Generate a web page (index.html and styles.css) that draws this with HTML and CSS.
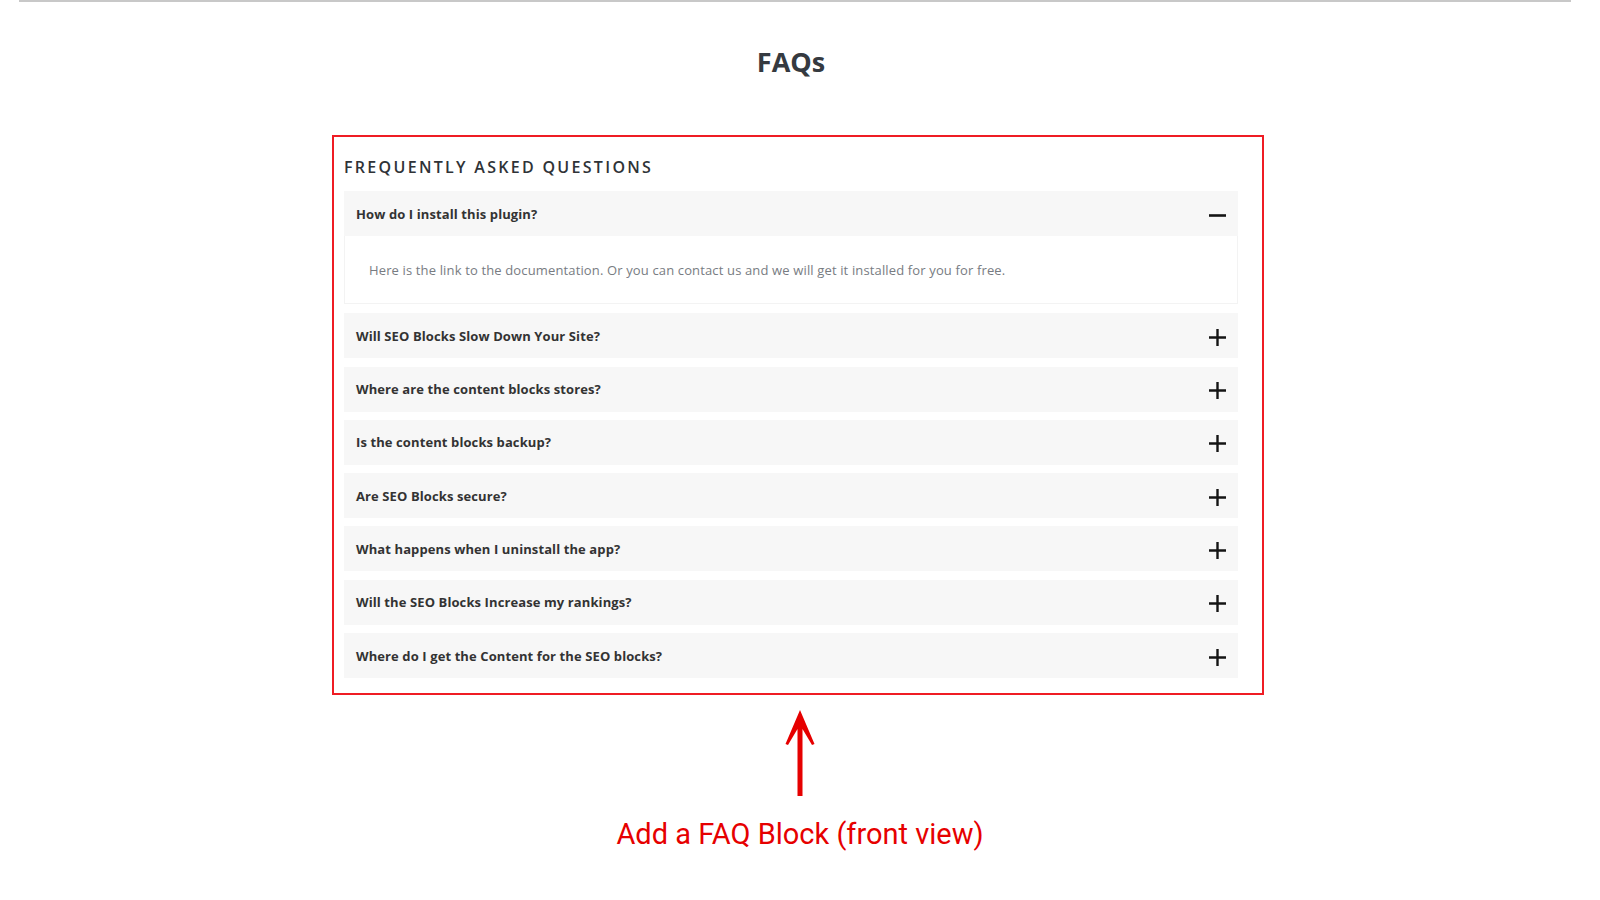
FILE: index.html
```html
<!DOCTYPE html>
<html lang="en">
<head>
<meta charset="utf-8">
<title>FAQs</title>
<link rel="stylesheet" href="styles.css">
</head>
<body>
<div class="topline"></div>
<h1 class="page-title">FAQs</h1>
<section class="faq-box">
  <h2 class="faq-heading">Frequently Asked Questions</h2>
  <div class="faq-list">
    <div class="faq-item open">
      <div class="faq-q">
        <span>How do I install this plugin?</span>
        <svg class="icon" viewBox="0 0 17 17" width="17" height="17"><line x1="0" y1="8.5" x2="17" y2="8.5" stroke="#141414" stroke-width="2.6"/></svg>
      </div>
      <div class="faq-a">Here is the link to the documentation. Or you can contact us and we will get it installed for you for free.</div>
    </div>
    <div class="faq-item">
      <div class="faq-q"><span>Will SEO Blocks Slow Down Your Site?</span>
        <svg class="icon" viewBox="0 0 17 17" width="17" height="17"><path d="M0 8.5H17M8.5 0V17" stroke="#141414" stroke-width="2.4"/></svg></div>
    </div>
    <div class="faq-item">
      <div class="faq-q"><span>Where are the content blocks stores?</span>
        <svg class="icon" viewBox="0 0 17 17" width="17" height="17"><path d="M0 8.5H17M8.5 0V17" stroke="#141414" stroke-width="2.4"/></svg></div>
    </div>
    <div class="faq-item">
      <div class="faq-q"><span>Is the content blocks backup?</span>
        <svg class="icon" viewBox="0 0 17 17" width="17" height="17"><path d="M0 8.5H17M8.5 0V17" stroke="#141414" stroke-width="2.4"/></svg></div>
    </div>
    <div class="faq-item">
      <div class="faq-q"><span>Are SEO Blocks secure?</span>
        <svg class="icon" viewBox="0 0 17 17" width="17" height="17"><path d="M0 8.5H17M8.5 0V17" stroke="#141414" stroke-width="2.4"/></svg></div>
    </div>
    <div class="faq-item">
      <div class="faq-q"><span>What happens when I uninstall the app?</span>
        <svg class="icon" viewBox="0 0 17 17" width="17" height="17"><path d="M0 8.5H17M8.5 0V17" stroke="#141414" stroke-width="2.4"/></svg></div>
    </div>
    <div class="faq-item">
      <div class="faq-q"><span>Will the SEO Blocks Increase my rankings?</span>
        <svg class="icon" viewBox="0 0 17 17" width="17" height="17"><path d="M0 8.5H17M8.5 0V17" stroke="#141414" stroke-width="2.4"/></svg></div>
    </div>
    <div class="faq-item">
      <div class="faq-q"><span>Where do I get the Content for the SEO blocks?</span>
        <svg class="icon" viewBox="0 0 17 17" width="17" height="17"><path d="M0 8.5H17M8.5 0V17" stroke="#141414" stroke-width="2.4"/></svg></div>
    </div>
  </div>
</section>
<div class="annotation">
  <svg class="arrow" viewBox="0 0 30 87" width="30" height="87">
    <path d="M15 0 L29.5 34 L27 35 L17.5 19 L17.5 86 L12.5 86 L12.5 19 L3 35 L0.5 34 Z" fill="#e60000"/>
  </svg>
  <p class="annotation-text">Add a FAQ Block (front view)</p>
</div>
</body>
</html>
```
FILE: styles.css
```css
* { box-sizing: border-box; }
html, body { margin: 0; padding: 0; }
body {
  width: 1600px;
  height: 900px;
  overflow: hidden;
  background: #fff;
  font-family: "Open Sans", "Liberation Sans", sans-serif;
  color: #333;
}
.topline {
  margin: 0 29px 0 19px;
  border-top: 2px solid #c8c8c8;
}
.page-title {
  margin: 43px 0 0 344px;
  width: 894px;
  text-align: center;
  font-size: 27px;
  line-height: 34px;
  font-weight: 700;
  color: #353a40;
}
.faq-box {
  margin: 56px 0 0 332px;
  width: 932px;
  border: 2px solid #ef1c24;
  padding: 19px 24px 15px 10px;
}
.faq-heading {
  margin: 0 0 13px 0;
  font-size: 16px;
  line-height: 22px;
  font-weight: 600;
  letter-spacing: 2.3px;
  text-transform: uppercase;
  color: #2f3337;
}
.faq-list {
  display: flex;
  flex-direction: column;
  gap: 8.3px;
}
.faq-q {
  height: 45px;
  background: #f7f7f7;
  display: flex;
  align-items: center;
  justify-content: space-between;
  padding: 0 12px;
  font-size: 13px;
  font-weight: 700;
  letter-spacing: 0.1px;
  color: #333;
}
.faq-a {
  height: 68px;
  background: #fff;
  border: 1px solid #f3f3f3;
  border-top: none;
  display: flex;
  align-items: center;
  padding: 0 24px;
  font-size: 13px;
  letter-spacing: 0.14px;
  color: #787c82;
  margin-bottom: 1px;
}
.icon { display: block; flex: none; margin-top: 3px; }
.annotation {
  display: flex;
  flex-direction: column;
  align-items: center;
  margin-top: 15px;
}
.arrow { display: block; }
.annotation-text {
  margin: 20px 0 0 0;
  font-family: Roboto, "Liberation Sans", sans-serif;
  font-size: 29px;
  line-height: 34px;
  color: #e60000;
}
```
